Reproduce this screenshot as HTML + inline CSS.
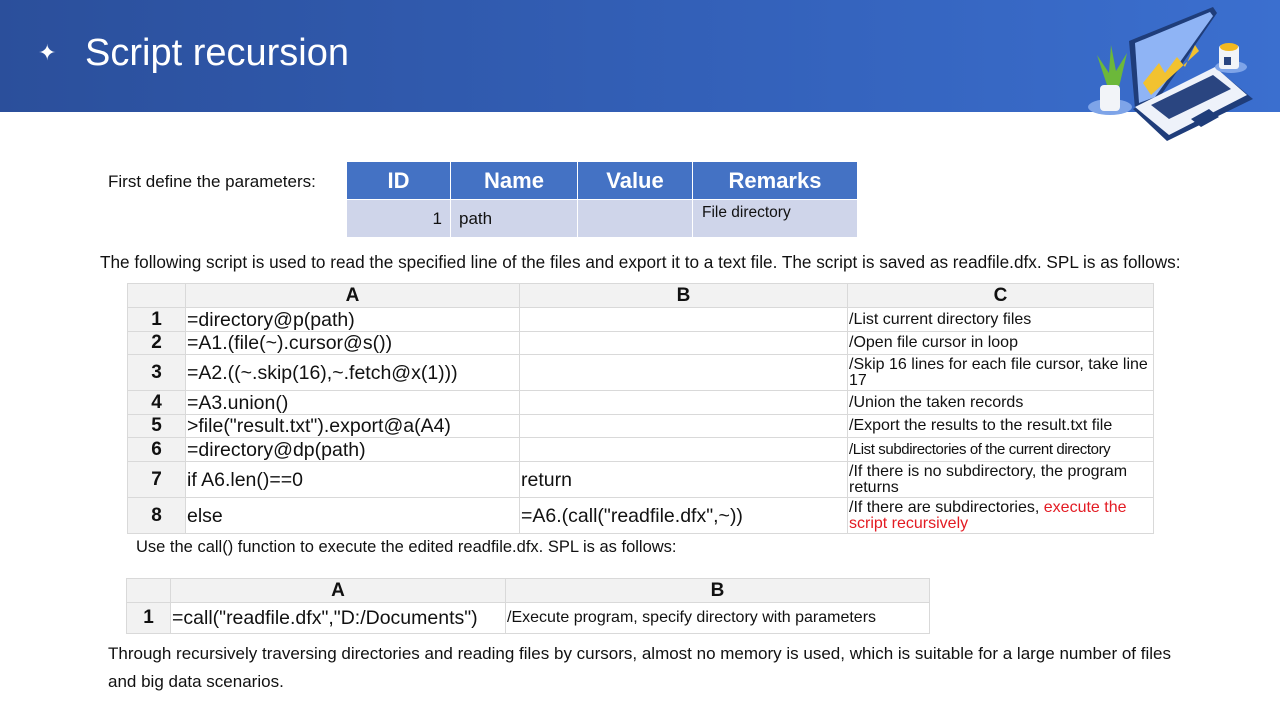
<!DOCTYPE html>
<html><head><meta charset="utf-8"><style>
*{margin:0;padding:0;box-sizing:border-box}
body{width:1280px;height:720px;position:relative;background:#fff;font-family:"Liberation Sans","Noto Sans CJK SC",sans-serif;color:#111;overflow:hidden}
.hdr{position:absolute;left:0;top:0;width:1280px;height:112px;background:linear-gradient(90deg,#2b4f9b 0%,#3462bb 60%,#3b6fcf 100%)}
.t{position:absolute;white-space:nowrap}
table{position:absolute;border-collapse:collapse;table-layout:fixed}
td{border:1px solid #d9d9d9;padding:0 1px;overflow:hidden;vertical-align:middle;white-space:nowrap}
.g td{font-size:19.5px;line-height:22px}
.g td.n{background:#f2f2f2;text-align:center;font-weight:bold;font-size:19px}
.g tr.h td{background:#f2f2f2;text-align:center;font-weight:bold;font-size:19px}
.g td.c{font-size:16px;line-height:16px;white-space:normal}
</style></head><body>
<div class="hdr"></div>
<div class="t" style="left:38px;top:40px;color:#fff;font-size:22px">✦</div>
<div class="t" style="left:85px;top:28px;color:#fff;font-size:38px;line-height:50px">Script recursion</div>
<svg style="position:absolute;left:1085px;top:5px" width="170" height="138" viewBox="0 0 170 138">
<ellipse cx="25" cy="102" rx="22" ry="8" fill="#7ea4e8"/>
<path d="M22 80 L12 50 L24 68 L26 40 L31 66 L42 48 L34 82 Z" fill="#6cb83a"/>
<rect x="15" y="80" width="20" height="26" rx="4" fill="#f2f4f8"/>
<path d="M44 36 L128 2 L132 8 L72 96 L50 104 Z" fill="#1f3d7a"/>
<path d="M50 38 L125 7 L128 11 L70 92 L54 98 Z" fill="#8fb4f5"/>
<path d="M58 78 L74 58 L80 68 L92 52 L100 62 L110 40 L114 46 L66 90Z" fill="#f2c230"/>
<path d="M48 104 L132 64 L168 94 L82 136 Z" fill="#1f3d7a"/>
<path d="M50 102 L130 62 L162 90 L84 130 Z" fill="#eef2fa"/>
<path d="M66 100 L128 70 L146 84 L84 114Z" fill="#2a4580"/>
<path d="M106 114 L124 104 L134 112 L116 122Z" fill="#1f3d7a"/>
<ellipse cx="146" cy="62" rx="16" ry="6" fill="#7ea4e8"/>
<rect x="134" y="40" width="20" height="24" rx="3" fill="#f2f4f8"/>
<ellipse cx="144" cy="42" rx="9" ry="4" fill="#f2b820"/>
<rect x="139" y="52" width="7" height="8" fill="#2a4580"/>
</svg>

<div class="t" style="left:108px;top:172px;font-size:17px">First define the parameters:</div>
<table style="left:346px;top:161px;width:511px">
<colgroup><col style="width:104px"><col style="width:127px"><col style="width:115px"><col style="width:165px"></colgroup>
<tr style="height:38px;background:#4472c4;color:#fff;font-weight:bold;font-size:22px;text-align:center"><td style="border:1px solid #fff">ID</td><td style="border:1px solid #fff">Name</td><td style="border:1px solid #fff">Value</td><td style="border:1px solid #fff">Remarks</td></tr>
<tr style="height:38px;background:#cfd5ea;font-size:17px"><td style="border:1px solid #fff;text-align:right;padding-right:8px">1</td><td style="border:1px solid #fff;padding-left:8px">path</td><td style="border:1px solid #fff"></td><td style="border:1px solid #fff;padding-left:9px;font-size:15.5px;vertical-align:top;padding-top:4px">File directory</td></tr>
</table>
<div class="t" style="left:100px;top:252px;font-size:17.2px">The following script is used to read the specified line of the files and export it to a text file. The script is saved as readfile.dfx. SPL is as follows:</div>
<table class="g" style="left:127px;top:283px;width:1026px">
<colgroup><col style="width:58px"><col style="width:334px"><col style="width:328px"><col style="width:306px"></colgroup>
<tr class="h" style="height:24px"><td></td><td>A</td><td>B</td><td>C</td></tr>
<tr style="height:24px"><td class="n">1</td><td>=directory@p(path)</td><td></td><td class="c">/List current directory files</td></tr>
<tr style="height:23px"><td class="n">2</td><td>=A1.(file(~).cursor@s())</td><td></td><td class="c">/Open file cursor in loop</td></tr>
<tr style="height:36px"><td class="n">3</td><td>=A2.((~.skip(16),~.fetch@x(1)))</td><td></td><td class="c">/Skip 16 lines for each file cursor, take line 17</td></tr>
<tr style="height:24px"><td class="n">4</td><td>=A3.union()</td><td></td><td class="c">/Union the taken records</td></tr>
<tr style="height:23px"><td class="n">5</td><td>&gt;file("result.txt").export@a(A4)</td><td></td><td class="c">/Export the results to the result.txt file</td></tr>
<tr style="height:24px"><td class="n">6</td><td>=directory@dp(path)</td><td></td><td class="c" style="white-space:nowrap;font-size:15px;letter-spacing:-0.4px">/List subdirectories of the current directory</td></tr>
<tr style="height:36px"><td class="n">7</td><td>if A6.len()==0</td><td>return</td><td class="c">/If there is no subdirectory, the program returns</td></tr>
<tr style="height:36px"><td class="n">8</td><td>else</td><td>=A6.(call("readfile.dfx",~))</td><td class="c">/If there are subdirectories, <span style="color:#e31b23">execute the script recursively</span></td></tr>
</table>
<div class="t" style="left:136px;top:538px;font-size:16.5px">Use the call() function to execute the edited readfile.dfx. SPL is as follows:</div>
<table class="g" style="left:126px;top:578px;width:803px">
<colgroup><col style="width:44px"><col style="width:335px"><col style="width:424px"></colgroup>
<tr class="h" style="height:24px"><td></td><td>A</td><td>B</td></tr>
<tr style="height:31px"><td class="n">1</td><td>=call("readfile.dfx","D:/Documents")</td><td class="c" style="font-size:16px">/Execute program, specify directory with parameters</td></tr>
</table>
<div class="t" style="left:108px;top:640px;font-size:17px;line-height:28px">Through recursively traversing directories and reading files by cursors, almost no memory is used, which is suitable for a large number of files<br>and big data scenarios.</div>
</body></html>
